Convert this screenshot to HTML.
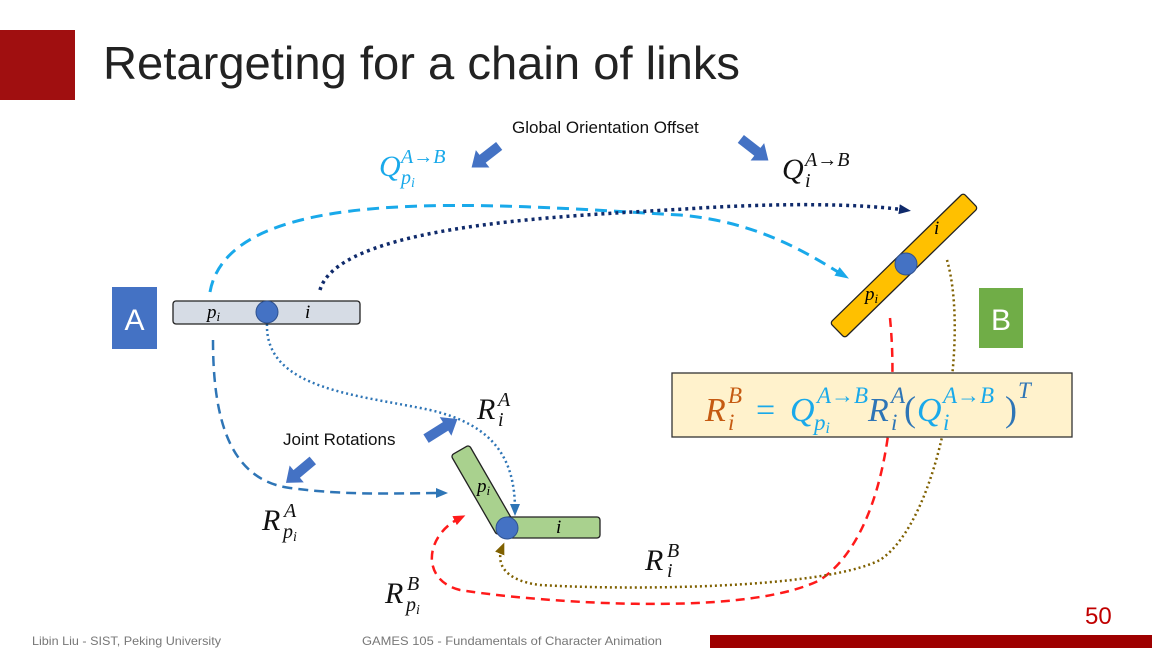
<!DOCTYPE html>
<html><head><meta charset="utf-8"><style>
html,body{margin:0;padding:0;background:#fff;}
body{width:1152px;height:648px;overflow:hidden;position:relative;font-family:"Liberation Sans",sans-serif;}
svg{position:absolute;left:0;top:0;}
.m{font-family:"Liberation Serif",serif;font-style:italic;}
</style></head><body>
<svg width="1152" height="648" viewBox="0 0 1152 648" xmlns="http://www.w3.org/2000/svg">
<defs>
<marker id="aNV" markerWidth="12" markerHeight="12" refX="6" refY="6" orient="auto" markerUnits="userSpaceOnUse"><path d="M0,1 L12,6 L0,11z" fill="#0f2a6b"/></marker>
<marker id="aB" markerWidth="12" markerHeight="12" refX="6" refY="6" orient="auto" markerUnits="userSpaceOnUse"><path d="M0,1 L12,6 L0,11z" fill="#2e75b6"/></marker>
<marker id="aR" markerWidth="12" markerHeight="12" refX="6" refY="6" orient="auto" markerUnits="userSpaceOnUse"><path d="M0,1 L12,6 L0,11z" fill="#ff1a1a"/></marker>
<marker id="aO" markerWidth="12" markerHeight="12" refX="6" refY="6" orient="auto" markerUnits="userSpaceOnUse"><path d="M0,1 L12,6 L0,11z" fill="#7f6000"/></marker>
<marker id="aL2" markerWidth="14" markerHeight="12" refX="7" refY="6" orient="auto" markerUnits="userSpaceOnUse"><path d="M0,1 L14,6 L0,11z" fill="#19a9ea"/></marker>
</defs>
<rect x="0" y="30" width="75" height="70" fill="#a00f10"/>
<text x="103" y="79" font-size="46" fill="#222" textLength="637" lengthAdjust="spacingAndGlyphs">Retargeting for a chain of links</text>

<!-- curves -->
<path d="M210,292 C230,180 500,205 680,215 C760,222 810,255 843,275" fill="none" stroke="#19a9ea" stroke-width="3" stroke-dasharray="12,7" marker-end="url(#aL2)"/>
<path d="M320,290 C340,220 600,215 700,208 C800,202 870,205 905,210" fill="none" stroke="#0f2a6b" stroke-width="3.5" stroke-dasharray="3,4" marker-end="url(#aNV)"/>
<path d="M213,340 C213,420 230,480 290,488 C350,496 400,493 442,493" fill="none" stroke="#2e75b6" stroke-width="2.5" stroke-dasharray="10,6" marker-end="url(#aB)"/>
<path d="M267,324 C265,390 360,395 430,410 C495,425 515,460 515,510" fill="none" stroke="#2e75b6" stroke-width="2.5" stroke-dasharray="2,3" marker-end="url(#aB)"/>
<path d="M890,318 C900,420 880,540 820,580 C740,620 520,600 460,590 C420,580 425,535 460,518" fill="none" stroke="#ff1a1a" stroke-width="2.5" stroke-dasharray="9,6" marker-end="url(#aR)"/>
<path d="M947,260 C970,340 940,520 880,560 C820,590 620,590 540,585 C500,580 497,560 502,548" fill="none" stroke="#7f6000" stroke-width="2.5" stroke-dasharray="2,3" marker-end="url(#aO)"/>

<!-- A bar -->
<rect x="173" y="301" width="187" height="23" rx="3" fill="#d6dce5" stroke="#222" stroke-width="1.3"/>
<text class="m" x="207" y="318" font-size="19">p<tspan font-size="13" dy="3">i</tspan></text>
<text class="m" x="305" y="318" font-size="19">i</text>
<circle cx="267" cy="312" r="11" fill="#4472c4" stroke="#2f528f"/>

<!-- A, B boxes -->
<rect x="112" y="287" width="45" height="62" fill="#4472c4"/>
<text x="134.5" y="330" font-size="30" fill="#fff" text-anchor="middle">A</text>
<rect x="979" y="288" width="44" height="60" fill="#70ad47"/>
<text x="1001" y="330" font-size="30" fill="#fff" text-anchor="middle">B</text>

<!-- yellow bar -->
<g transform="translate(904,265.5) rotate(-44.3)">
<rect x="-93" y="-10.5" width="186" height="21" rx="3" fill="#ffc000" stroke="#222" stroke-width="1.3"/>
</g>
<text class="m" x="865" y="300" font-size="19">p<tspan font-size="13" dy="3">i</tspan></text>
<text class="m" x="934" y="234" font-size="19">i</text>
<circle cx="906" cy="264" r="11" fill="#4472c4" stroke="#2f528f"/>

<!-- green bars -->
<g transform="translate(483,490) rotate(60)">
<rect x="-46" y="-10.5" width="92" height="21" rx="3" fill="#a9d18e" stroke="#222" stroke-width="1.3"/>
</g>
<rect x="505" y="517" width="95" height="21" rx="3" fill="#a9d18e" stroke="#222" stroke-width="1.3"/>
<text class="m" x="477" y="492" font-size="19">p<tspan font-size="13" dy="3">i</tspan></text>
<text class="m" x="556" y="533" font-size="19">i</text>
<circle cx="507" cy="528" r="11" fill="#4472c4" stroke="#2f528f"/>

<!-- formula -->
<rect x="672" y="373" width="400" height="64" fill="#fff2cc" stroke="#333" stroke-width="1.3"/>
<g class="m">
<text x="705" y="421" font-size="34" fill="#c55a11">R</text>
<text x="728" y="403" font-size="23" fill="#c55a11">B</text>
<text x="728" y="430" font-size="23" fill="#c55a11">i</text>
<text x="756" y="421" font-size="34" fill="#19a9ea" font-style="normal">=</text>
<text x="790" y="421" font-size="34" fill="#19a9ea">Q</text>
<text x="817" y="403" font-size="23" fill="#19a9ea">A→B</text>
<text x="814" y="430" font-size="23" fill="#19a9ea">p<tspan font-size="16" dy="3">i</tspan></text>
<text x="868" y="421" font-size="34" fill="#2e75b6">R</text>
<text x="891" y="403" font-size="23" fill="#2e75b6">A</text>
<text x="891" y="430" font-size="23" fill="#2e75b6">i</text>
<text x="904" y="421" font-size="36" fill="#2e75b6" font-style="normal">(</text>
<text x="917" y="421" font-size="34" fill="#19a9ea">Q</text>
<text x="943" y="403" font-size="23" fill="#19a9ea">A→B</text>
<text x="943" y="430" font-size="23" fill="#19a9ea">i</text>
<text x="1005" y="421" font-size="36" fill="#2e75b6" font-style="normal">)</text>
<text x="1018" y="398" font-size="23" fill="#2e75b6">T</text>
</g>

<!-- labels -->
<text x="512" y="133" font-size="17" fill="#111">Global Orientation Offset</text>
<text x="283" y="445" font-size="17" fill="#111">Joint Rotations</text>
<g class="m">
<text x="379" y="176" font-size="30" fill="#19a9ea">Q</text>
<text x="401" y="163" font-size="20" fill="#19a9ea">A→B</text>
<text x="401" y="184" font-size="20" fill="#19a9ea">p<tspan font-size="14" dy="3">i</tspan></text>

<text x="782" y="179" font-size="30" fill="#111">Q</text>
<text x="805" y="166" font-size="20" fill="#111">A→B</text>
<text x="805" y="187" font-size="20" fill="#111">i</text>

<text x="477" y="419" font-size="30" fill="#111">R</text>
<text x="498" y="406" font-size="20" fill="#111">A</text>
<text x="498" y="426" font-size="20" fill="#111">i</text>

<text x="262" y="530" font-size="30" fill="#111">R</text>
<text x="284" y="517" font-size="20" fill="#111">A</text>
<text x="283" y="538" font-size="20" fill="#111">p<tspan font-size="14" dy="3">i</tspan></text>

<text x="645" y="570" font-size="30" fill="#111">R</text>
<text x="667" y="557" font-size="20" fill="#111">B</text>
<text x="667" y="577" font-size="20" fill="#111">i</text>

<text x="385" y="603" font-size="30" fill="#111">R</text>
<text x="407" y="590" font-size="20" fill="#111">B</text>
<text x="406" y="611" font-size="20" fill="#111">p<tspan font-size="14" dy="3">i</tspan></text>
</g>

<!-- block arrows -->
<g fill="#4472c4">
<g transform="translate(485,157) rotate(142)"><path d="M-18,-5 L3,-5 L3,-11 L17,0 L3,11 L3,5 L-18,5z"/></g>
<g transform="translate(755,150) rotate(38)"><path d="M-18,-5 L3,-5 L3,-11 L17,0 L3,11 L3,5 L-18,5z"/></g>
<g transform="translate(443,428) rotate(-32)"><path d="M-20,-5 L3,-5 L3,-11 L17,0 L3,11 L3,5 L-20,5z"/></g>
<g transform="translate(299,472) rotate(140)"><path d="M-18,-5 L3,-5 L3,-11 L17,0 L3,11 L3,5 L-18,5z"/></g>
</g>

<!-- footer -->
<text x="32" y="645" font-size="12" fill="#777" textLength="189" lengthAdjust="spacingAndGlyphs">Libin Liu - SIST, Peking University</text>
<text x="362" y="645" font-size="12" fill="#777" textLength="300" lengthAdjust="spacingAndGlyphs">GAMES 105 - Fundamentals of Character Animation</text>
<rect x="710" y="635" width="442" height="13" fill="#9e0000"/>
<text x="1085" y="624" font-size="24" fill="#c00000">50</text>
</svg>
</body></html>
